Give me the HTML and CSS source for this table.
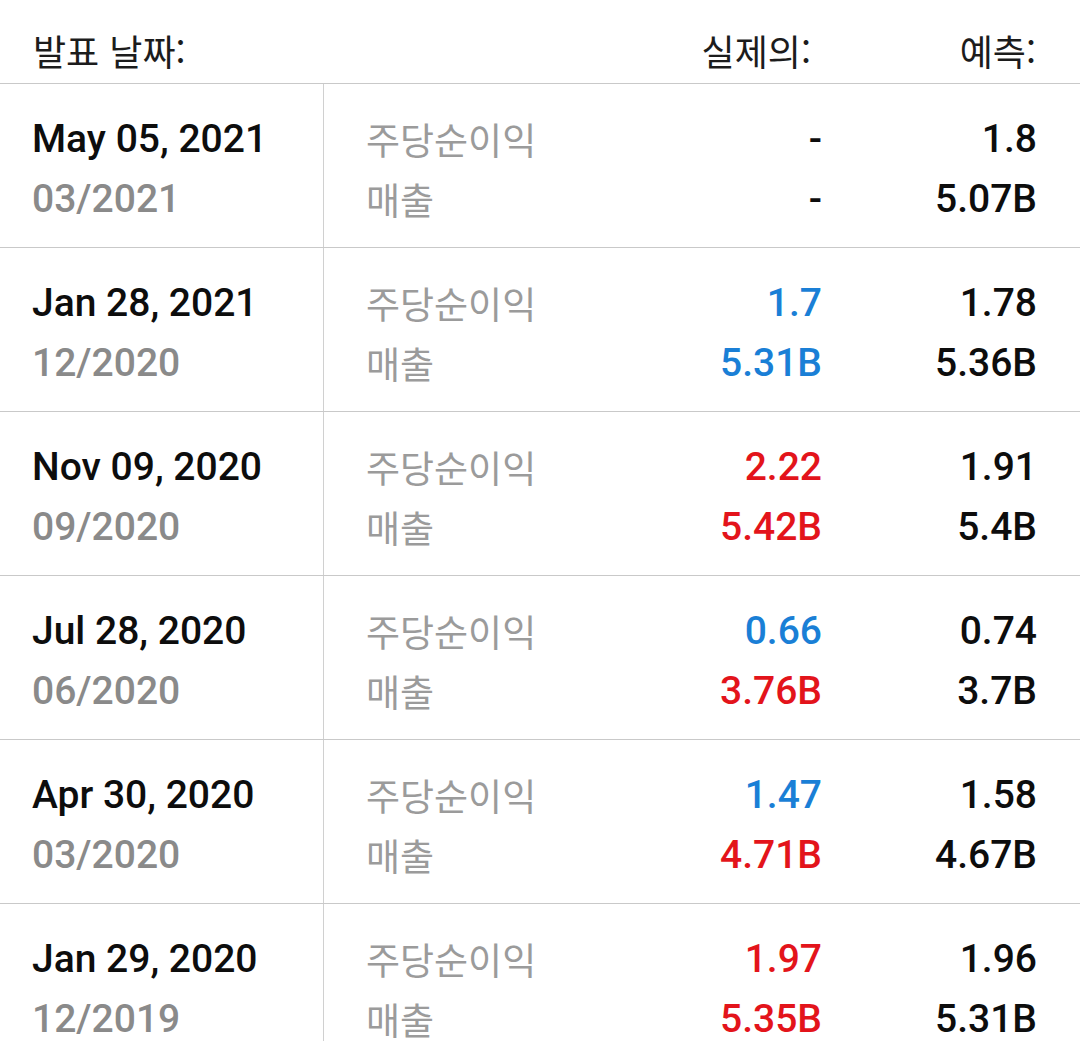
FILE: index.html
```html
<!DOCTYPE html>
<html lang="ko">
<head>
<meta charset="utf-8">
<title>실적 발표</title>
<link rel="stylesheet" href="styles.css">
</head>
<body>
<div class="earnings">
  <div class="head">
    <div class="h-date">발표 날짜:</div>
    <div class="h-actual">실제의:</div>
    <div class="h-fc">예측:</div>
  </div>

  <div class="row">
    <div class="date"><div class="d1">May 05, 2021</div><div class="d2">03/2021</div></div>
    <div class="labels"><div>주당순이익</div><div>매출</div></div>
    <div class="actual"><div>-</div><div>-</div></div>
    <div class="fc"><div>1.8</div><div>5.07B</div></div>
  </div>

  <div class="row">
    <div class="date"><div class="d1">Jan 28, 2021</div><div class="d2">12/2020</div></div>
    <div class="labels"><div>주당순이익</div><div>매출</div></div>
    <div class="actual"><div class="up">1.7</div><div class="up">5.31B</div></div>
    <div class="fc"><div>1.78</div><div>5.36B</div></div>
  </div>

  <div class="row">
    <div class="date"><div class="d1">Nov 09, 2020</div><div class="d2">09/2020</div></div>
    <div class="labels"><div>주당순이익</div><div>매출</div></div>
    <div class="actual"><div class="dn">2.22</div><div class="dn">5.42B</div></div>
    <div class="fc"><div>1.91</div><div>5.4B</div></div>
  </div>

  <div class="row">
    <div class="date"><div class="d1">Jul 28, 2020</div><div class="d2">06/2020</div></div>
    <div class="labels"><div>주당순이익</div><div>매출</div></div>
    <div class="actual"><div class="up">0.66</div><div class="dn">3.76B</div></div>
    <div class="fc"><div>0.74</div><div>3.7B</div></div>
  </div>

  <div class="row">
    <div class="date"><div class="d1">Apr 30, 2020</div><div class="d2">03/2020</div></div>
    <div class="labels"><div>주당순이익</div><div>매출</div></div>
    <div class="actual"><div class="up">1.47</div><div class="dn">4.71B</div></div>
    <div class="fc"><div>1.58</div><div>4.67B</div></div>
  </div>

  <div class="row">
    <div class="date"><div class="d1">Jan 29, 2020</div><div class="d2">12/2019</div></div>
    <div class="labels"><div>주당순이익</div><div>매출</div></div>
    <div class="actual"><div class="dn">1.97</div><div class="dn">5.35B</div></div>
    <div class="fc"><div>1.96</div><div>5.31B</div></div>
  </div>
</div>
</body>
</html>
```

FILE: styles.css
```css
html, body {
  margin: 0;
  padding: 0;
  background: #ffffff;
}

body {
  width: 1080px;
  height: 1041px;
  overflow: hidden;
  font-family: Roboto, "Noto Sans CJK KR", sans-serif;
}

.earnings {
  width: 1080px;
}

.head {
  display: grid;
  grid-template-columns: 600px 222px 215px;
  height: 84px;
  box-sizing: border-box;
  padding: 26px 0 10px 0;
  border-bottom: 1px solid #c9c9c9;
  font-family: "Noto Sans CJK KR", sans-serif;
  font-size: 36px;
  line-height: 48px;
  color: #1c1c1c;
}

.head .h-date {
  padding-left: 33px;
}

.head .h-actual {
  text-align: right;
  padding-right: 11px;
}

.head .h-fc {
  text-align: right;
  padding-right: 1px;
}

.row {
  display: grid;
  grid-template-columns: 324px 276px 222px 215px;
  border-bottom: 1px solid #c9c9c9;
  height: 164px;
  box-sizing: border-box;
}

.row > div {
  padding-top: 25px;
  line-height: 60px;
}

.date {
  padding-left: 32px;
  border-right: 1px solid #d0d0d0;
  font-size: 39px;
  font-weight: 500;
}

.d1 {
  color: #0d0d0d;
}

.d2 {
  color: #8a8a8a;
}

.labels {
  padding-left: 42px;
  font-family: "Noto Sans CJK KR", sans-serif;
  font-size: 37px;
  color: #9b9b9b;
}

.actual,
.fc {
  text-align: right;
  font-size: 39px;
  font-weight: 500;
  color: #0d0d0d;
}

.actual .up {
  color: #1a7fd6;
}

.actual .dn {
  color: #e3141b;
}
```
